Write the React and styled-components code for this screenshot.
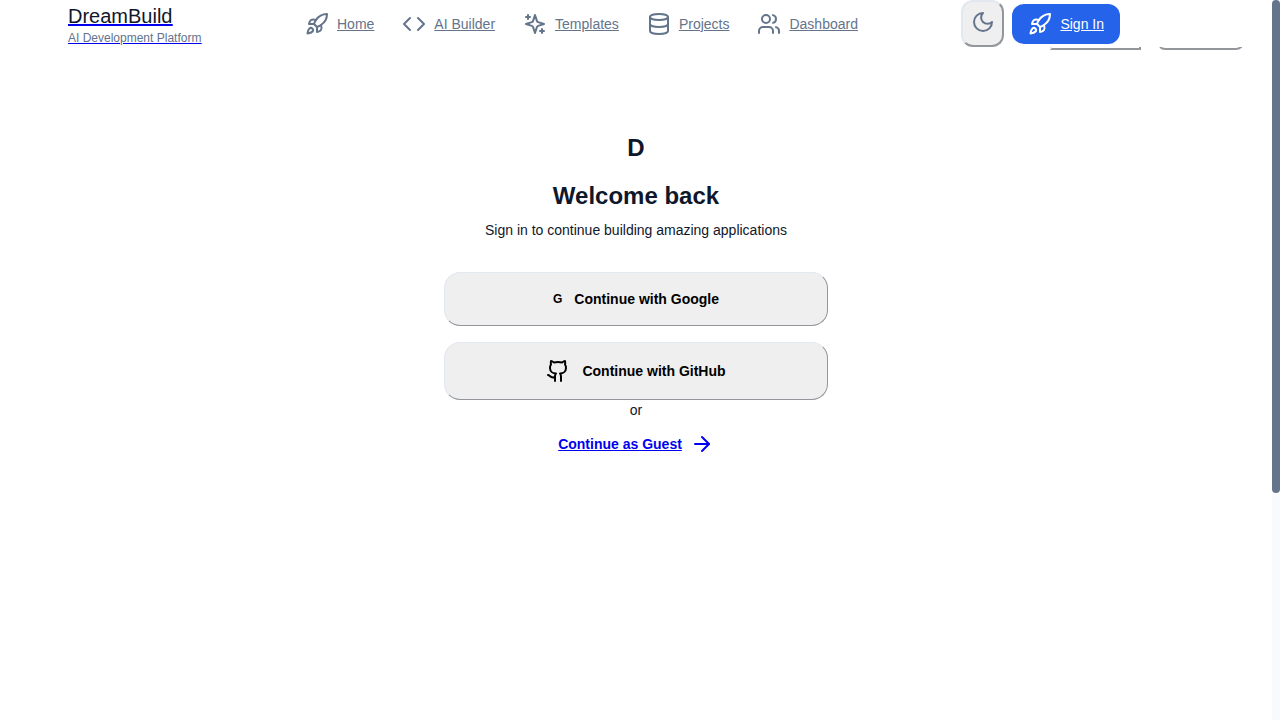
import React from "react";
import styled, { createGlobalStyle } from "styled-components";
import { Rocket, Code, Database, Users, Github, ArrowRight } from "lucide-react";

const GlobalStyle = createGlobalStyle`
  * { box-sizing: border-box; }
  body {
    margin: 0;
    background: #fff;
    color: #0f172a;
    font: 14px/20px "Liberation Sans", Arial, sans-serif;
  }
  button { font: inherit; margin: 0; }
`;

const Shell = styled.div`
  display: grid;
  grid-template-columns: minmax(0, 1fr) 8px;
  min-height: 100vh;
`;

const Page = styled.div`
  position: relative;
`;

const Header = styled.header`
  position: relative;
`;

const HeaderBand = styled.div`
  position: relative;
  z-index: 1;
  background: #fff;
`;

const HeaderInner = styled.div`
  display: grid;
  grid-template-columns: 237px 1fr auto;
  align-items: center;
  max-width: 1200px;
  height: 47px;
  margin: 0 auto;
  padding: 0 32px;
`;

const Brand = styled.a`
  display: flex;
  flex-direction: column;
  align-items: flex-start;
  color: #0000ee;
`;

const BrandName = styled.span`
  font-size: 20px;
  line-height: 28px;
  text-decoration: underline;
`;

const Ink = styled.span`
  color: ${(p) => p.$color};
`;

const Tagline = styled.span`
  font-size: 12px;
  line-height: 16px;
  text-decoration: underline;
`;

const Nav = styled.nav`
  display: flex;
  gap: 28px;
`;

const NavLink = styled.a`
  display: flex;
  align-items: center;
  gap: 8px;
  color: #64748b;
`;

const Actions = styled.div`
  display: flex;
  align-items: center;
  gap: 8px;
  margin-right: 84px;
`;

const ThemeButton = styled.button`
  width: 43px;
  height: 47px;
  padding: 8px;
  border: 2px outset #e2e8f0;
  border-radius: 12px;
  background: #efefef;
  color: #64748b;
`;

const SignIn = styled.a`
  display: flex;
  align-items: center;
  gap: 8px;
  height: 40px;
  padding: 0 16px;
  border-radius: 12px;
  background: #2563eb;
  color: #fff;
`;

const BackBar = styled.div`
  position: absolute;
  top: 0;
  right: 28px;
  display: flex;
  gap: 16px;
`;

const BackButton = styled.button`
  width: ${(p) => p.$width}px;
  height: 50px;
  border: 2px outset #e2e8f0;
  border-radius: ${(p) => p.$radius}px;
  background: #fff;
`;

const Main = styled.main`
  display: flex;
  flex-direction: column;
  align-items: center;
  max-width: 384px;
  margin: 0 auto;
  padding-top: 85px;
`;

const Mark = styled.div`
  font-size: 24px;
  font-weight: 700;
  line-height: 32px;
`;

const Title = styled.h1`
  margin: 16px 0 8px;
  font-size: 24px;
  line-height: 32px;
`;

const Intro = styled.p`
  margin: 0 0 32px;
`;

const ProviderButton = styled.button`
  display: flex;
  align-items: center;
  justify-content: center;
  gap: 12px;
  width: 100%;
  padding: 16px;
  border: 1px outset #e2e8f0;
  border-radius: 16px;
  background: #efefef;
  color: #000;
  font-weight: 700;
  & + & { margin-top: 16px; }
`;

const Letter = styled.span`
  font-size: 12px;
`;

const GuestLink = styled.a`
  display: flex;
  align-items: center;
  gap: 8px;
  margin-top: 12px;
  color: #0000ee;
  font-weight: 700;
`;

const Track = styled.div`
  height: 100vh;
  background: #f8fafc;
`;

const Thumb = styled.div`
  height: 68.5%;
  border-radius: 4px;
  background: #64748b;
`;

const Stroke = styled.svg.attrs({ viewBox: "0 0 24 24", width: 24, height: 24, "aria-hidden": true })`
  fill: none;
  stroke: currentColor;
  stroke-width: 2;
  stroke-linecap: round;
  stroke-linejoin: round;
`;

const SparkleIcon = () => (
  <Stroke>
    <path d="m12 3-1.912 5.813a2 2 0 0 1-1.275 1.275L3 12l5.813 1.912a2 2 0 0 1 1.275 1.275L12 21l1.912-5.813a2 2 0 0 1 1.275-1.275L21 12l-5.813-1.912a2 2 0 0 1-1.275-1.275L12 3Z" />
    <path d="M5 3v4M3 5h4M19 17v4M17 19h4" />
  </Stroke>
);

const MoonIcon = () => (
  <Stroke>
    <path d="M12 3a6 6 0 0 0 9 9 9 9 0 1 1-9-9Z" />
  </Stroke>
);

const links = [
  ["Home", Rocket],
  ["AI Builder", Code],
  ["Templates", SparkleIcon],
  ["Projects", Database],
  ["Dashboard", Users],
];

export default function App() {
  return (
    <Shell>
      <GlobalStyle />
      <Page>
        <Header>
          <BackBar>
            <BackButton $width={91} $radius={0} aria-label="Secondary action" />
            <BackButton $width={87} $radius={8} aria-label="Primary action" />
          </BackBar>
          <HeaderBand>
            <HeaderInner>
              <Brand href="#">
                <BrandName><Ink $color="#0f172a">DreamBuild</Ink></BrandName>
                <Tagline><Ink $color="#64748b">AI Development Platform</Ink></Tagline>
              </Brand>
              <Nav>
                {links.map(([label, Icon]) => (
                  <NavLink href="#" key={label}>
                    <Icon />
                    <span>{label}</span>
                  </NavLink>
                ))}
              </Nav>
              <Actions>
                <ThemeButton aria-label="Toggle theme"><MoonIcon /></ThemeButton>
                <SignIn href="#"><Rocket /><span>Sign In</span></SignIn>
              </Actions>
            </HeaderInner>
          </HeaderBand>
        </Header>
        <Main>
          <Mark>D</Mark>
          <Title>Welcome back</Title>
          <Intro>Sign in to continue building amazing applications</Intro>
          <ProviderButton><Letter>G</Letter>Continue with Google</ProviderButton>
          <ProviderButton><Github />Continue with GitHub</ProviderButton>
          <span>or</span>
          <GuestLink href="#">Continue as Guest<ArrowRight /></GuestLink>
        </Main>
      </Page>
      <Track><Thumb /></Track>
    </Shell>
  );
}
